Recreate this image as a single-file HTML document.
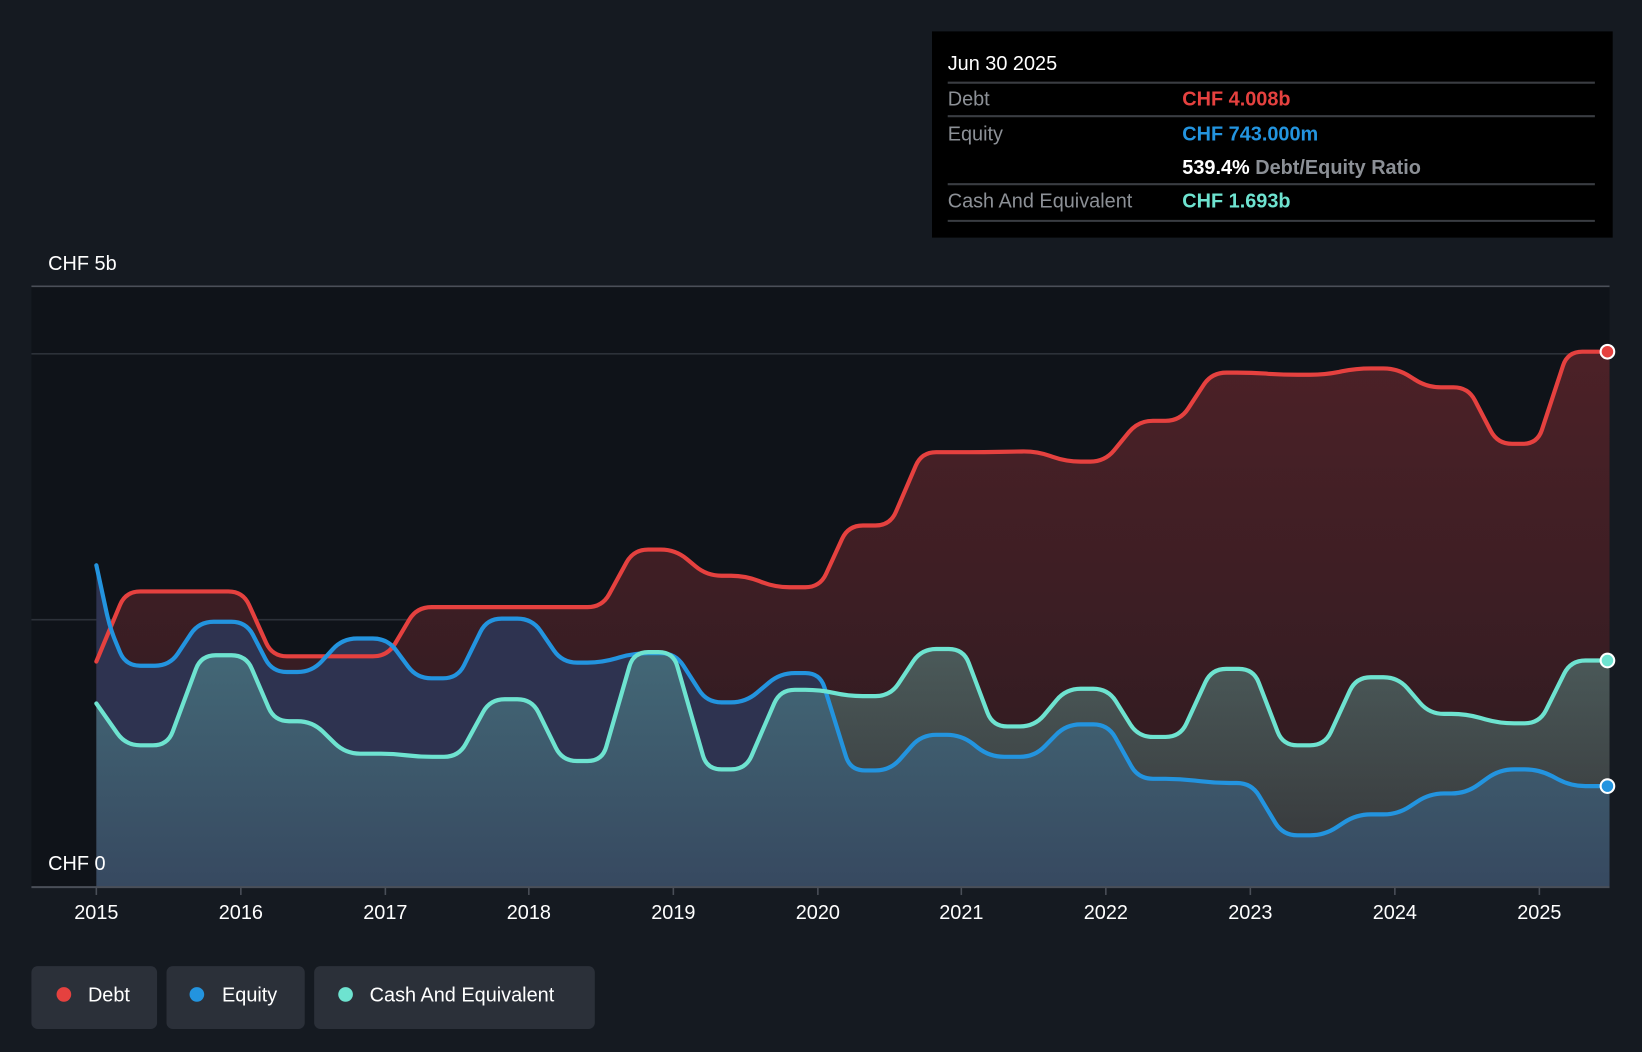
<!DOCTYPE html>
<html><head><meta charset="utf-8"><style>
html,body{margin:0;padding:0;background:#151a21;}
svg{display:block;font-family:"Liberation Sans",sans-serif;}
</style></head><body>
<svg width="1642" height="1052" viewBox="0 0 1568 1005" preserveAspectRatio="none">
<defs>
<linearGradient id="dg" x1="0" y1="0" x2="0" y2="1"><stop offset="0" stop-color="#4c2127"/><stop offset="1" stop-color="#2a1a20"/></linearGradient>
<linearGradient id="cg" x1="0" y1="0" x2="0" y2="1"><stop offset="0" stop-color="#6ccfc2" stop-opacity="0.34"/><stop offset="1" stop-color="#6ccfc2" stop-opacity="0.14"/></linearGradient>
</defs>
<rect width="1568" height="1005" fill="#151a21"/>
<rect x="30" y="273" width="1507" height="574" fill="#0f1319"/>
<line x1="30" y1="273.5" x2="1537" y2="273.5" stroke="#4a4f58" stroke-width="1.5"/>
<line x1="30" y1="338" x2="1537" y2="338" stroke="#2c3139" stroke-width="1.5"/>
<line x1="30" y1="592" x2="1537" y2="592" stroke="#2c3139" stroke-width="1.5"/>
<path id="fd" fill="url(#dg)"/>
<path id="fe" fill="#2e3350"/>
<path id="fc" fill="url(#cg)"/>
<path id="ld" fill="none" stroke="#e5413f" stroke-width="4" stroke-linecap="round"/>
<path id="le" fill="none" stroke="#2394df" stroke-width="4" stroke-linecap="round"/>
<path id="lc" fill="none" stroke="#6ee3d0" stroke-width="4" stroke-linecap="round"/>
<circle cx="1535" cy="336" r="6.5" fill="#e5413f" stroke="#fff" stroke-width="2"/>
<circle cx="1535" cy="631" r="6.5" fill="#6ee3d0" stroke="#fff" stroke-width="2"/>
<circle cx="1535" cy="751" r="6.5" fill="#2394df" stroke="#fff" stroke-width="2"/>
<line x1="30" y1="847.5" x2="1537" y2="847.5" stroke="#4a4f58" stroke-width="2"/>
<g stroke="#4a4f58" stroke-width="1.5">
<line x1="92" y1="847" x2="92" y2="855"/><line x1="230" y1="847" x2="230" y2="855"/><line x1="368" y1="847" x2="368" y2="855"/><line x1="505" y1="847" x2="505" y2="855"/><line x1="643" y1="847" x2="643" y2="855"/><line x1="781" y1="847" x2="781" y2="855"/><line x1="918" y1="847" x2="918" y2="855"/><line x1="1056" y1="847" x2="1056" y2="855"/><line x1="1194" y1="847" x2="1194" y2="855"/><line x1="1332" y1="847" x2="1332" y2="855"/><line x1="1470" y1="847" x2="1470" y2="855"/>
</g>
<g fill="#fff" font-size="19" text-anchor="middle">
<text x="92" y="878">2015</text><text x="230" y="878">2016</text><text x="368" y="878">2017</text><text x="505" y="878">2018</text><text x="643" y="878">2019</text><text x="781" y="878">2020</text><text x="918" y="878">2021</text><text x="1056" y="878">2022</text><text x="1194" y="878">2023</text><text x="1332" y="878">2024</text><text x="1470" y="878">2025</text>
</g>
<text x="46" y="258" fill="#fff" font-size="19">CHF 5b</text>
<text x="46" y="831" fill="#fff" font-size="19">CHF 0</text>
<rect x="890" y="30" width="650" height="197" fill="#000"/>
<g stroke="#3a3d42" stroke-width="2">
<line x1="905" y1="79" x2="1523" y2="79"/><line x1="905" y1="111" x2="1523" y2="111"/><line x1="905" y1="176" x2="1523" y2="176"/><line x1="905" y1="211" x2="1523" y2="211"/>
</g>
<g font-size="19">
<text x="905" y="67" fill="#fff">Jun 30 2025</text>
<text x="905" y="101" fill="#8c9096">Debt</text>
<text x="1129" y="101" fill="#e5413f" font-weight="bold">CHF 4.008b</text>
<text x="905" y="134" fill="#8c9096">Equity</text>
<text x="1129" y="134" fill="#2394df" font-weight="bold">CHF 743.000m</text>
<text x="1129" y="166" fill="#fff" font-weight="bold">539.4% <tspan fill="#8c9096" font-weight="bold">Debt/Equity Ratio</tspan></text>
<text x="905" y="198" fill="#8c9096">Cash And Equivalent</text>
<text x="1129" y="198" fill="#6ee3d0" font-weight="bold">CHF 1.693b</text>
</g>
<rect x="30" y="923" width="120" height="60" rx="6" fill="#2b3039"/>
<rect x="159" y="923" width="132" height="60" rx="6" fill="#2b3039"/>
<rect x="300" y="923" width="268" height="60" rx="6" fill="#2b3039"/>
<circle cx="61" cy="950" r="7" fill="#e5413f"/>
<circle cx="188" cy="950" r="7" fill="#2394df"/>
<circle cx="330" cy="950" r="7" fill="#6ee3d0"/>
<g fill="#fff" font-size="19">
<text x="84" y="957">Debt</text><text x="212" y="957">Equity</text><text x="353" y="957">Cash And Equivalent</text>
</g>
</svg>
<script>
function P(s){var a=s.trim().split(/\s+/).map(function(p){var q=p.split(',');return[+q[0],+q[1]];});return a;}
function rp(pts){var d='M'+pts[0][0]+','+pts[0][1];for(var i=1;i<pts.length-1;i++){var p=pts[i-1],c=pts[i],n=pts[i+1];
var l1=Math.hypot(c[0]-p[0],c[1]-p[1]),l2=Math.hypot(n[0]-c[0],n[1]-c[1]);var r=Math.min(14,l1/2,l2/2);
var a=[c[0]-(c[0]-p[0])*r/l1,c[1]-(c[1]-p[1])*r/l1],b=[c[0]+(n[0]-c[0])*r/l2,c[1]+(n[1]-c[1])*r/l2];
d+=' L'+a[0].toFixed(1)+','+a[1].toFixed(1)+' Q'+c[0]+','+c[1]+' '+b[0].toFixed(1)+','+b[1].toFixed(1);}
var e=pts[pts.length-1];d+=' L'+e[0]+','+e[1];return d;}
var D=P("92,632 120,565 232,565 260,627 370,627 398,580 575,580 605,525 645,525 675,550 712,550 740,561 783,561 810,502 850,502 880,432 940,432 990,431 1018,441 1055,441 1087,402 1127,402 1157,356 1195,356 1225,358 1265,358 1295,352 1335,352 1362,370 1402,370 1430,424 1468,424 1497,336 1537,336");
var E=P("92,540 105,600 120,636 162,636 190,594 235,594 260,642 298,642 327,610 370,610 398,648 437,648 465,591 508,591 537,633 575,633 605,624 645,624 675,671 712,671 745,643 783,643 812,736 850,736 880,702 918,702 945,723 988,723 1018,692 1058,692 1087,744 1127,744 1160,748 1195,748 1225,798 1265,798 1295,778 1335,778 1365,758 1400,758 1432,735 1470,735 1500,751 1537,751");
var C=P("92,672 120,712 160,712 192,626 235,626 262,689 298,689 330,720 375,720 400,723 438,723 468,668 508,668 537,727 575,727 605,623 643,623 675,735 712,735 745,659 783,659 810,665 850,665 880,620 920,620 948,694 988,694 1018,658 1058,658 1087,704 1127,704 1157,639 1197,639 1225,712 1265,712 1295,647 1335,647 1365,682 1400,682 1432,691 1470,691 1500,631 1537,631");
[[D,'d'],[E,'e'],[C,'c']].forEach(function(x){var d=rp(x[0]);document.getElementById('l'+x[1]).setAttribute('d',d);
document.getElementById('f'+x[1]).setAttribute('d',d+' L1537,847 L92,847 Z');});
</script>
</body></html>
